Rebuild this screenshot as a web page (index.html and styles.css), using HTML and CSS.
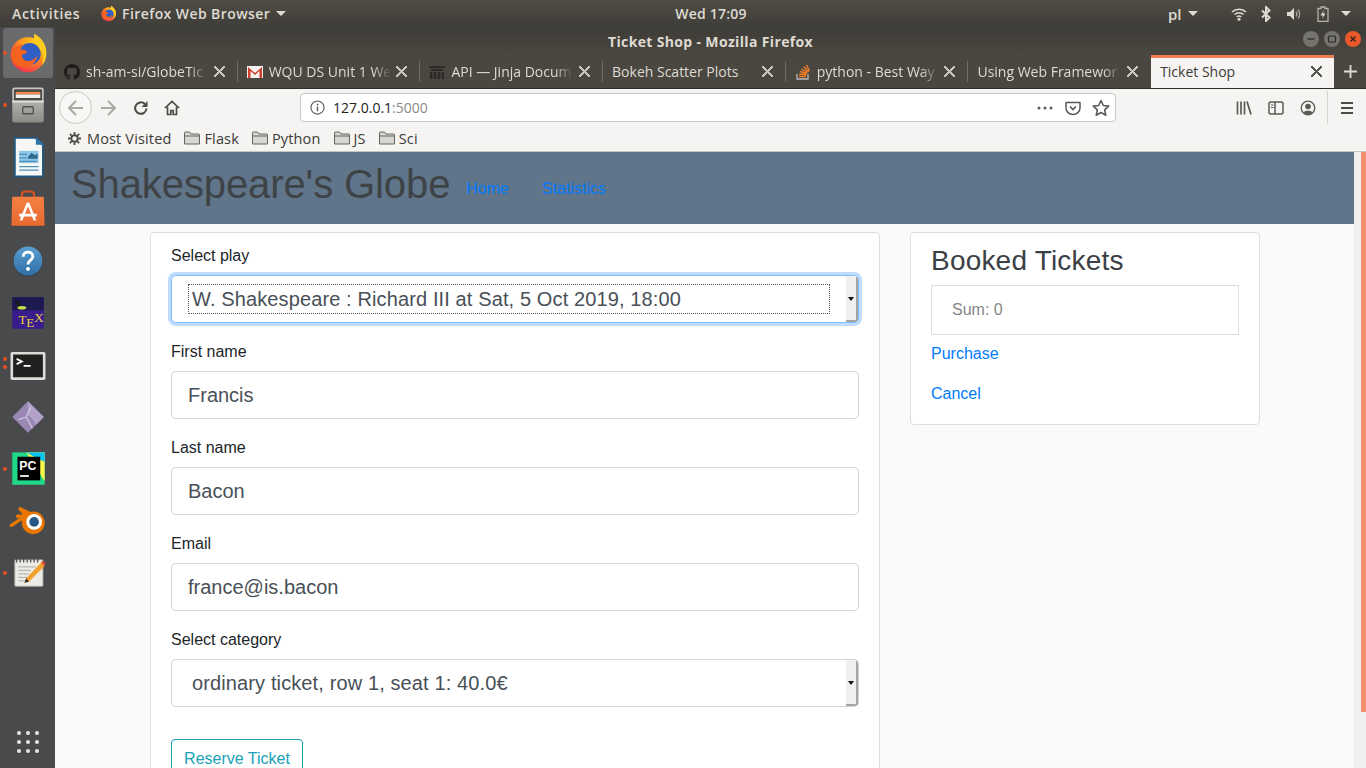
FILE: index.html
```html
<!doctype html>
<html lang="en">
<head>
    <meta charset="UTF-8">
    <title>Ticket Shop</title>
    <link rel="stylesheet" href="styles.css">
</head>
<body>
<svg class="sprites" width="0" height="0">
    <defs>
        <radialGradient id="ff-body" cx="75%" cy="15%" r="95%">
            <stop offset="0" stop-color="#ffd21f"/>
            <stop offset="0.45" stop-color="#ff9a1c"/>
            <stop offset="1" stop-color="#f0304f"/>
        </radialGradient>
        <linearGradient id="shop-bag" x1="0" y1="0" x2="0" y2="1">
            <stop offset="0" stop-color="#f58043"/>
            <stop offset="1" stop-color="#e8692e"/>
        </linearGradient>
        <linearGradient id="help-ball" x1="0" y1="0" x2="0" y2="1">
            <stop offset="0" stop-color="#5a9fd0"/>
            <stop offset="1" stop-color="#2f6ea6"/>
        </linearGradient>
        <linearGradient id="drawer" x1="0" y1="0" x2="0" y2="1">
            <stop offset="0" stop-color="#c9c9c5"/>
            <stop offset="1" stop-color="#8a8a86"/>
        </linearGradient>
        <symbol id="firefox" viewBox="0 0 48 48">
            <circle cx="24" cy="26" r="20" fill="url(#ff-body)"/>
            <path d="M31 2c8 4 15 12 14 24-.4 5-2 9-5 12 2-8 1-15-3-20-3-3-7-6-6-16z" fill="#ffcb1f"/>
            <circle cx="26" cy="25" r="12.5" fill="#2f5fc4"/>
            <path d="M5 23c2-5 8-9 14-9-3 2-4 4-3 6 3 0 6 1 7 3-1 2-4 2-6 3 0 5 4 8 9 7 4-1 7-4 9-6-2 8-9 14-18 13C9 40 3 31 5 23z" fill="#f4641e"/>
        </symbol>
        <symbol id="folder" viewBox="0 0 16 14">
            <path d="M.5 13V2q0-1 1-1h4l1.500 2h7.500q1 0 1 1v9z" fill="#d8d6d0" stroke="#66645f"/>
            <path d="M.5 5h15" stroke="#66645f"/>
        </symbol>
        <symbol id="github" viewBox="0 0 16 16">
            <path fill="#1d1c1a" d="M8 0C3.580 0 0 3.580 0 8c0 3.540 2.290 6.530 5.470 7.590.4.070.55-.17.55-.38 0-.19-.01-.82-.01-1.490-2.010.37-2.530-.49-2.690-.94-.09-.23-.48-.94-.82-1.130-.28-.15-.68-.52-.01-.53.63-.01 1.080.58 1.230.82.72 1.210 1.870.87 2.330.66.07-.52.28-.87.51-1.070-1.780-.2-3.640-.89-3.640-3.950 0-.87.31-1.590.82-2.150-.08-.2-.36-1.020.08-2.120 0 0 .67-.21 2.200.82.64-.18 1.320-.27 2-.27.68 0 1.360.09 2 .27 1.530-1.040 2.200-.82 2.200-.82.44 1.100.16 1.920.08 2.120.51.56.82 1.270.82 2.150 0 3.070-1.870 3.750-3.650 3.950.29.25.54.73.54 1.480 0 1.070-.01 1.930-.01 2.200 0 .21.15.46.55.38A8.013 8.013 0 0016 8c0-4.420-3.580-8-8-8z"/>
        </symbol>
    </defs>
</svg>

<header class="topbar">
    <span class="topbar-activities">Activities</span>
    <svg class="topbar-ff"><use href="#firefox"/></svg>
    <span class="topbar-app">Firefox Web Browser</span>
    <span class="caret"></span>
    <span class="topbar-clock">Wed 17:09</span>
    <span class="topbar-lang">pl</span>
    <span class="caret"></span>
    <svg class="tray tray-wifi" viewBox="0 0 16 14"><path d="M1 5a10 10 0 0 1 14 0M3.500 7.500a6.500 6.500 0 0 1 9 0M5.800 10a3.200 3.200 0 0 1 4.400 0" fill="none" stroke="#dfdbd2" stroke-width="1.500"/><circle cx="8" cy="12.300" r="1.500" fill="#dfdbd2"/></svg>
    <svg class="tray tray-bt" viewBox="0 0 12 16"><path d="M2 4.500l7.500 7L6 15V1l3.500 3.500L2 11.500" fill="none" stroke="#dfdbd2" stroke-width="2"/></svg>
    <svg class="tray tray-vol" viewBox="0 0 16 14"><path d="M1 5h3l4-4v12l-4-4H1z" fill="#dfdbd2"/><path d="M10 4.500a4 4 0 0 1 0 5M12 2.500a7 7 0 0 1 0 9" fill="none" stroke="#aaa79f" stroke-width="1.300"/></svg>
    <svg class="tray tray-bat" viewBox="0 0 12 16"><path d="M4 1h4v1.500h3v13H1v-13h3z" fill="none" stroke="#b5b2aa" stroke-width="1.300"/><path d="M7 4L3.500 9.500H6L5 13l3.500-5.500H6z" fill="#dfdbd2"/></svg>
    <span class="caret caret-last"></span>
</header>

<div class="desktop">
    <nav class="dock">
        <div class="dock-item dock-active">
            <i class="dot"></i>
            <svg class="dock-icon"><use href="#firefox"/></svg>
        </div>
        <div class="dock-item">
            <i class="dot"></i>
            <svg class="dock-icon" viewBox="0 0 48 48">
                <rect x="6" y="4" width="36" height="40" rx="3" fill="url(#drawer)"/>
                <rect x="8" y="6" width="32" height="13" fill="#4a4a48"/>
                <rect x="10" y="9" width="28" height="3" fill="#ef8a4c"/>
                <rect x="10" y="12" width="28" height="4" fill="#f1f0ee"/>
                <rect x="6" y="19" width="36" height="2" fill="#e4e4e0"/>
                <rect x="18" y="26" width="12" height="8" rx="1" fill="none" stroke="#4f4f4d" stroke-width="1.500"/>
            </svg>
        </div>
        <div class="dock-item">
            <svg class="dock-icon" viewBox="0 0 48 48">
                <path d="M8 1h25l9 9v37H8z" fill="#1e5a82"/>
                <path d="M10 3h22l8 8v34H10z" fill="#f7f7f5"/>
                <path d="M33 1l9 9h-9z" fill="#2a76a8"/>
                <rect x="14" y="17" width="22" height="14" fill="#8fc7e6"/>
                <path d="M24 24l4-5 4 3 3-2v6H24z" fill="#2f6b8e"/>
                <path d="M14 21h9M14 25h9M14 29h20M14 35h22M14 39h22" stroke="#4b93bd" stroke-width="1.500"/>
            </svg>
        </div>
        <div class="dock-item">
            <svg class="dock-icon" viewBox="0 0 48 48">
                <path d="M17 12V8q0-4 4-4h6q4 0 4 4v4" fill="none" stroke="#d9531e" stroke-width="2.500"/>
                <path d="M6 10h36l1 33H5z" fill="url(#shop-bag)"/>
                <path d="M24 17l-8 20M24 17l8 20M14 31h20" stroke="#fff" stroke-width="3" fill="none"/>
            </svg>
        </div>
        <div class="dock-item">
            <svg class="dock-icon" viewBox="0 0 48 48">
                <circle cx="24" cy="25" r="17" fill="#2c2d2e" opacity=".35"/>
                <circle cx="24" cy="24" r="16.500" fill="url(#help-ball)"/>
                <path d="M18.500 19c0-7 11-7 11 0 0 4-5.500 4-5.500 9" fill="none" stroke="#fff" stroke-width="3.200"/>
                <circle cx="24" cy="33" r="2.200" fill="#fff"/>
            </svg>
        </div>
        <div class="dock-item">
            <svg class="dock-icon" viewBox="0 0 48 48">
                <rect x="6" y="6" width="36" height="36" rx="2" fill="#3a1d8c"/>
                <rect x="6" y="6" width="36" height="15" fill="#1c1850"/>
                <path d="M8 8l6 4 4 7-6-3z" fill="#191919"/>
                <ellipse cx="17" cy="18" rx="5" ry="2" fill="#c8e04a"/>
                <text class="tex-logo" x="13" y="36">T</text>
                <text class="tex-logo" x="22" y="40">E</text>
                <text class="tex-logo" x="31" y="34">X</text>
            </svg>
        </div>
        <div class="dock-item">
            <i class="dot dot-upper"></i>
            <i class="dot dot-lower"></i>
            <svg class="dock-icon" viewBox="0 0 48 48">
                <rect x="4" y="9" width="40" height="32" rx="2" fill="#dcdcd8"/>
                <rect x="7" y="12" width="34" height="26" fill="#20201f"/>
                <path d="M11 17l6 3-6 3" fill="none" stroke="#fff" stroke-width="2"/>
                <path d="M19 25h8" stroke="#fff" stroke-width="2"/>
            </svg>
        </div>
        <div class="dock-item">
            <svg class="dock-icon" viewBox="0 0 48 48">
                <path d="M24 6l18 18-18 18L6 24z" fill="#9a87b5"/>
                <path d="M24 6l18 18-9 9c-2-5-5-9-9-11z" fill="#b3a2c9"/>
                <path d="M27 13l-5 11 7 13M22 24l-9 3" fill="none" stroke="#cfc5dd" stroke-width="1.500"/>
            </svg>
        </div>
        <div class="dock-item">
            <i class="dot"></i>
            <svg class="dock-icon" viewBox="0 0 48 48">
                <rect x="6" y="5" width="37" height="37" fill="#21d789"/>
                <path d="M22 5h21v33z" fill="#fcf84a"/>
                <path d="M22 5h21v11z" fill="#07c3f2"/>
                <rect x="12" y="10" width="26" height="27" fill="#000"/>
                <text class="pc-logo" x="14" y="25">PC</text>
                <rect x="15" y="31" width="10" height="2" fill="#fff"/>
            </svg>
        </div>
        <div class="dock-item">
            <svg class="dock-icon" viewBox="0 0 48 48">
                <path d="M5 29l15-10-8-.5h10L15 10l16 8" fill="none" stroke="#ea7600" stroke-width="4" stroke-linecap="round" stroke-linejoin="round"/>
                <circle cx="30" cy="26" r="13" fill="#ea7600"/>
                <circle cx="31" cy="25" r="9" fill="#fff"/>
                <circle cx="31" cy="25" r="5.500" fill="#265787"/>
            </svg>
        </div>
        <div class="dock-item">
            <i class="dot"></i>
            <svg class="dock-icon" viewBox="0 0 48 48">
                <rect x="9" y="9" width="32" height="30" rx="1" fill="#ecebe6" stroke="#bdbcb6"/>
                <path d="M11 8v4M15 8v4M19 8v4M23 8v4M27 8v4M31 8v4M35 8v4" stroke="#55544f" stroke-width="1.500"/>
                <path d="M13 17h20M13 21h14M13 25h12M13 29h10M13 33h8" stroke="#a3a29c"/>
                <path d="M20 35l2-5 17-18 4 4-18 18z" fill="#f1a02d"/>
                <path d="M39 12l2-2 3 3-1 3z" fill="#e2403f"/>
                <path d="M20 35l2-5 3 4z" fill="#2b2a28"/>
            </svg>
        </div>
        <div class="dock-apps">
            <i></i><i></i><i></i><i></i><i></i><i></i><i></i><i></i><i></i>
        </div>
    </nav>

    <div class="window">
        <div class="titlebar">
            <span class="titlebar-text">Ticket Shop - Mozilla Firefox</span>
            <div class="winbtns">
                <span class="winbtn"><svg viewBox="0 0 10 10"><path d="M1.500 5h7" stroke="#2e2d2a" stroke-width="1.300"/></svg></span>
                <span class="winbtn"><svg viewBox="0 0 10 10"><rect x="1.500" y="2" width="7" height="6" rx="1" fill="none" stroke="#2e2d2a" stroke-width="1.200"/></svg></span>
                <span class="winbtn winbtn-close"><svg viewBox="0 0 10 10"><path d="M2.500 2.500l5 5m0-5l-5 5" stroke="#3a2015" stroke-width="1.300"/></svg></span>
            </div>
        </div>

        <div class="tabs">
            <div class="tab">
                <svg class="favicon"><use href="#github"/></svg>
                <span class="tab-title">sh-am-si/GlobeTic</span>
                <span class="tab-close"></span>
            </div>
            <div class="tab">
                <svg class="favicon" viewBox="0 0 16 16">
                    <rect y="2" width="16" height="12" fill="#f4f2ee"/>
                    <path d="M1 14V3l7 6 7-6v11h-2.500V7L8 11 3.500 7v7z" fill="#d23f31"/>
                </svg>
                <span class="tab-title">WQU DS Unit 1 We</span>
                <span class="tab-close"></span>
            </div>
            <div class="tab">
                <svg class="favicon" viewBox="0 0 16 16">
                    <path d="M0 2h16v2H0zM2 5h12v2H2zM1 8h14v7H1z" fill="#2c2b28"/>
                    <path d="M4 8v7M8 8v7M12 8v7" stroke="#55534e"/>
                </svg>
                <span class="tab-title">API — Jinja Docum</span>
                <span class="tab-close"></span>
            </div>
            <div class="tab">
                <span class="tab-title tab-title-plain">Bokeh Scatter Plots</span>
                <span class="tab-close"></span>
            </div>
            <div class="tab">
                <svg class="favicon" viewBox="0 0 16 16">
                    <path d="M2 10v5h11v-5" fill="none" stroke="#bcbbbb" stroke-width="1.300"/>
                    <path d="M4 12.500h7M4.200 10l7 .8M5 7.500l6.800 2M6.500 5l6 3.500M8.800 2.800l4.800 5M11.500 1l3 6" stroke="#f48024" stroke-width="1.400"/>
                </svg>
                <span class="tab-title">python - Best Way</span>
                <span class="tab-close"></span>
            </div>
            <div class="tab tab-last">
                <span class="tab-title tab-title-plain tab-title-fade">Using Web Framewor</span>
                <span class="tab-close"></span>
            </div>
            <div class="tab tab-active">
                <span class="tab-title tab-title-plain">Ticket Shop</span>
                <span class="tab-close"></span>
            </div>
            <svg class="tab-new" viewBox="0 0 14 14"><path d="M7 0v14M0 7h14" stroke="#dfdbd2" stroke-width="2"/></svg>
        </div>

        <div class="toolbar">
            <span class="back-btn">
                <svg viewBox="0 0 18 18"><path d="M16 9H2M9 2L2 9l7 7" fill="none" stroke="#a9a8a5" stroke-width="2"/></svg>
            </span>
            <svg class="tool tool-forward" viewBox="0 0 18 18"><path d="M2 9h14M9 2l7 7-7 7" fill="none" stroke="#a9a8a5" stroke-width="2"/></svg>
            <svg class="tool tool-reload" viewBox="0 0 16 16"><path d="M13.500 8.500A5.700 5.700 0 1 1 11.800 4" fill="none" stroke="#4b4a47" stroke-width="2"/><path d="M14.500 1v6h-6z" fill="#4b4a47"/></svg>
            <svg class="tool tool-home" viewBox="0 0 16 16"><path d="M1 8l7-6.500L15 8M3.500 7v7.500h3.300v-4h2.400v4h3.300V7" fill="none" stroke="#4b4a47" stroke-width="1.700"/></svg>
            <div class="urlbar">
                <svg class="url-info" viewBox="0 0 16 16"><circle cx="8" cy="8" r="7" fill="none" stroke="#5a5956" stroke-width="1.200"/><path d="M8 7v5M8 4v1.800" stroke="#5a5956" stroke-width="1.500"/></svg>
                <span class="url-text">127.0.0.1<span class="url-port">:5000</span></span>
                <svg class="url-dots" viewBox="0 0 16 4"><circle cx="2" cy="2" r="1.500"/><circle cx="8" cy="2" r="1.500"/><circle cx="14" cy="2" r="1.500"/></svg>
                <svg class="url-pocket" viewBox="0 0 16 16"><path d="M1 2.500h14v5.500a7 6.500 0 0 1-14 0z" fill="none" stroke="#5a5956" stroke-width="1.500" stroke-linejoin="round"/><path d="M5 6.500l3 3 3-3" fill="none" stroke="#5a5956" stroke-width="1.700"/></svg>
                <svg class="url-star" viewBox="0 0 18 18"><path d="M9 1.500l2.300 5 5.400.6-4 3.700 1.100 5.400L9 13.500l-4.800 2.700 1.100-5.400-4-3.700 5.400-.6z" fill="none" stroke="#5a5956" stroke-width="1.600" stroke-linejoin="round"/></svg>
            </div>
            <svg class="tool tool-library" viewBox="0 0 16 16"><path d="M1.500 1.500v13M5 1.500v13M8.500 1.500v13M11 1.500l4 13" fill="none" stroke="#5a5956" stroke-width="1.700"/></svg>
            <svg class="tool tool-sidebar" viewBox="0 0 16 16"><rect x="1" y="2" width="14" height="12" rx="2" fill="none" stroke="#5a5956" stroke-width="1.500"/><path d="M7 2v12" stroke="#5a5956" stroke-width="1.500"/><path d="M3 5h2.500M3 7.500h2.500" stroke="#5a5956"/></svg>
            <svg class="tool tool-account" viewBox="0 0 16 16"><circle cx="8" cy="8" r="6.800" fill="none" stroke="#5a5956" stroke-width="1.300"/><circle cx="8" cy="6.500" r="2.800" fill="#5a5956"/><path d="M3.500 12.500c1-2.500 8-2.500 9 0-2 2-7 2-9 0z" fill="#5a5956"/></svg>
            <span class="toolbar-sep"></span>
            <svg class="tool tool-menu" viewBox="0 0 16 16"><path d="M2 3h12M2 8h12M2 13h12" stroke="#4b4a47" stroke-width="2"/></svg>
        </div>

        <div class="bookmarks">
            <span class="bookmark">
                <svg class="bookmark-gear" viewBox="0 0 16 16"><circle cx="8" cy="8" r="4" fill="none" stroke="#4b4a47" stroke-width="2.400"/><path d="M8 0v3M8 13v3M0 8h3M13 8h3M2.300 2.300l2.100 2.100M11.600 11.600l2.100 2.100M2.300 13.700l2.100-2.100M11.600 4.400l2.100-2.100" stroke="#4b4a47" stroke-width="2.200"/></svg>
                Most Visited
            </span>
            <span class="bookmark"><svg class="bookmark-folder"><use href="#folder"/></svg>Flask</span>
            <span class="bookmark"><svg class="bookmark-folder"><use href="#folder"/></svg>Python</span>
            <span class="bookmark"><svg class="bookmark-folder"><use href="#folder"/></svg>JS</span>
            <span class="bookmark"><svg class="bookmark-folder"><use href="#folder"/></svg>Sci</span>
        </div>

        <div class="viewport">
            <div class="page">
                <div class="site-header">
                    <span class="site-title">Shakespeare's Globe</span>
                    <a class="site-link" href="#">Home</a>
                    <a class="site-link" href="#">Statistics</a>
                </div>
                <div class="site-main">
                    <form class="card card-form">
                        <div class="form-group">
                            <label>Select play</label>
                            <div class="select select-focus">
                                <span class="select-value"><span class="select-ring">W. Shakespeare : Richard III at Sat, 5 Oct 2019, 18:00</span></span>
                                <span class="select-arrow"></span>
                            </div>
                        </div>
                        <div class="form-group">
                            <label>First name</label>
                            <div class="input">Francis</div>
                        </div>
                        <div class="form-group">
                            <label>Last name</label>
                            <div class="input">Bacon</div>
                        </div>
                        <div class="form-group">
                            <label>Email</label>
                            <div class="input">france@is.bacon</div>
                        </div>
                        <div class="form-group">
                            <label>Select category</label>
                            <div class="select">
                                <span class="select-value"><span class="select-ring">ordinary ticket, row 1, seat 1: 40.0€</span></span>
                                <span class="select-arrow"></span>
                            </div>
                        </div>
                        <button class="btn-reserve" type="button">Reserve Ticket</button>
                    </form>
                    <aside class="card card-side">
                        <h3 class="side-title">Booked Tickets</h3>
                        <div class="side-sum">Sum: 0</div>
                        <a class="side-link" href="#">Purchase</a>
                        <a class="side-link" href="#">Cancel</a>
                    </aside>
                </div>
            </div>
            <div class="scrollbar"><span class="scrollbar-thumb"></span></div>
        </div>
    </div>
</div>
</body>
</html>
```

FILE: styles.css
```css
* {
    box-sizing: border-box;
}

html, body {
    margin: 0;
    height: 768px;
    overflow: hidden;
}

body {
    display: flex;
    flex-direction: column;
    font-family: "Open Sans", "Noto Sans", sans-serif;
    font-size: 14px;
    background: #494a4b;
}

.sprites {
    position: absolute;
}

/* gnome top bar */
.topbar {
    flex: none;
    height: 27px;
    display: flex;
    align-items: center;
    position: relative;
    padding-left: 12px;
    color: #dfdbd2;
    font-weight: 600;
    background: linear-gradient(#4f4c45, #3f3d38);
}

.topbar-activities {
    width: 88px;
    letter-spacing: .7px;
}

.topbar-ff {
    width: 17px;
    height: 17px;
    margin-right: 5px;
}

.topbar-app {
    width: 154px;
    letter-spacing: .42px;
}

.caret {
    width: 0;
    height: 0;
    border: 5px solid transparent;
    border-top: 5px solid #dfdbd2;
    border-bottom: 0;
}

.topbar-clock {
    position: absolute;
    left: 0;
    width: 1422px;
    text-align: center;
    letter-spacing: .2px;
}

.topbar-lang {
    margin-left: 882px;
    width: 20px;
    font-size: 15px;
}

.tray {
    height: 16px;
    width: 16px;
}

.tray-wifi {
    margin-left: 33px;
}

.tray-bt {
    margin-left: 11px;
}

.tray-vol {
    margin-left: 12px;
}

.tray-bat {
    margin-left: 13px;
}

.caret-last {
    margin-left: 10px;
}

.desktop {
    flex: 1;
    display: flex;
    min-height: 0;
}

/* launcher */
.dock {
    flex: none;
    width: 55px;
    padding-top: 1px;
    display: flex;
    flex-direction: column;
    align-items: center;
    background: #494a4b;
}

.dock-item {
    width: 50px;
    height: 50px;
    flex: none;
    margin-bottom: 2px;
    position: relative;
    display: flex;
    align-items: center;
    justify-content: center;
    border-radius: 3px;
}

.dock-active {
    background: #6a6b6c;
}

.dock-icon {
    width: 42px;
    height: 42px;
}

.dot {
    position: absolute;
    left: 0;
    top: 23px;
    width: 4px;
    height: 4px;
    border-radius: 50%;
    background: #e8501f;
}

.dot-upper {
    top: 17px;
}

.dot-lower {
    top: 25px;
}

.tex-logo {
    font-family: "Liberation Serif", serif;
    font-size: 15px;
    fill: #e6d23a;
}

.pc-logo {
    font-family: "Liberation Sans", sans-serif;
    font-size: 14px;
    font-weight: 700;
    fill: #fff;
}

.dock-apps {
    margin-top: auto;
    margin-bottom: 15px;
    display: grid;
    grid-template-columns: repeat(3, 4px);
    gap: 5px;
}

.dock-apps i {
    height: 4px;
    width: 4px;
    border-radius: 50%;
    background: #e6e6e4;
}

/* firefox window */
.window {
    flex: 1;
    min-width: 0;
    display: flex;
    flex-direction: column;
}

.titlebar {
    flex: none;
    height: 28px;
    position: relative;
    display: flex;
    align-items: center;
    justify-content: center;
    color: #dfdbd2;
    font-weight: 700;
    font-size: 14px;
    letter-spacing: .35px;
    background: linear-gradient(#3e3c37, #4a4741);
}

.winbtns {
    position: absolute;
    right: 5px;
    top: 4px;
    display: flex;
    gap: 5px;
}

.winbtn {
    width: 16px;
    height: 16px;
    border-radius: 50%;
    background: #75736d;
    display: flex;
    align-items: center;
    justify-content: center;
}

.winbtn svg {
    width: 10px;
    height: 10px;
}

.winbtn-close {
    background: #e9592c;
}

.tabs {
    flex: none;
    height: 34px;
    display: flex;
    align-items: center;
    color: #dfdbd2;
    background: #4a4741;
    border-bottom: 1px solid #2f2e2a;
}

.tab {
    flex: none;
    width: 182.700px;
    height: 33px;
    display: flex;
    align-items: center;
    padding-left: 9px;
    position: relative;
}

.tab::after {
    content: "";
    position: absolute;
    right: 0;
    top: 6px;
    bottom: 6px;
    width: 1px;
    background: #6e6b64;
}

.tab-last::after,
.tab-active::after {
    display: none;
}

.tab-active {
    color: #3c3b37;
    background: #f5f4f2;
    border-top: 3px solid #ef7b53;
    padding-bottom: 4px;
}

.favicon {
    flex: none;
    width: 16px;
    height: 16px;
    margin-right: 6px;
}

.tab-title {
    flex: none;
    width: 122px;
    white-space: nowrap;
    -webkit-mask-image: linear-gradient(90deg, #000 85%, transparent);
    mask-image: linear-gradient(90deg, #000 85%, transparent);
}

.tab-title-plain {
    width: 144px;
    -webkit-mask-image: none;
    mask-image: none;
}

.tab-title-fade {
    -webkit-mask-image: linear-gradient(90deg, #000 88%, transparent);
    mask-image: linear-gradient(90deg, #000 88%, transparent);
}

.tab-close {
    position: absolute;
    right: 13px;
    top: 11px;
    width: 11px;
    height: 11px;
    opacity: .85;
    background:
        linear-gradient(45deg, transparent 45%, currentColor 45%, currentColor 55%, transparent 55%),
        linear-gradient(-45deg, transparent 45%, currentColor 45%, currentColor 55%, transparent 55%);
}

.tab-active .tab-close {
    right: 12px;
    top: 8px;
}

.tab-new {
    width: 13px;
    height: 13px;
    margin-left: 10px;
}

.toolbar {
    flex: none;
    height: 37px;
    display: flex;
    align-items: center;
    padding-left: 4px;
    background: #f5f4f2;
}

.back-btn {
    flex: none;
    width: 33px;
    height: 33px;
    border-radius: 50%;
    border: 1px solid #c9c8c4;
    background: #f8f7f6;
    display: flex;
    align-items: center;
    justify-content: center;
}

.back-btn svg {
    width: 18px;
    height: 18px;
}

.tool {
    flex: none;
    width: 16px;
    height: 16px;
}

.tool-forward {
    width: 18px;
    height: 18px;
    margin-left: 7px;
}

.tool-reload {
    margin-left: 16px;
}

.tool-home {
    margin-left: 15px;
}

.urlbar {
    flex: none;
    width: 816px;
    height: 29px;
    margin-left: 120px;
    display: flex;
    align-items: center;
    background: #fff;
    border: 1px solid #c9c8c4;
    border-radius: 4px;
    padding-left: 9px;
}

.url-info {
    width: 15px;
    height: 15px;
    margin-right: 8px;
}

.url-text {
    flex: 1;
    color: #242320;
    font-size: 14px;
}

.url-port {
    color: #8b8a87;
}

.url-dots {
    width: 16px;
    height: 4px;
    fill: #5a5956;
}

.url-pocket {
    width: 16px;
    height: 16px;
    margin-left: 12px;
}

.url-star {
    width: 18px;
    height: 18px;
    margin: 0 5px 0 11px;
}

.tool-library {
    margin-left: 120px;
}

.tool-sidebar {
    margin-left: 16px;
}

.tool-account {
    margin-left: 16px;
}

.toolbar-sep {
    width: 1px;
    height: 33px;
    margin: 0 11px;
    background: #d5d4d0;
}

.bookmarks {
    flex: none;
    height: 26px;
    display: flex;
    align-items: center;
    padding: 0 0 1px 13px;
    font-size: 14.500px;
    letter-spacing: .15px;
    color: #3c3b37;
    background: #f5f4f2;
    border-bottom: 1px solid #c8c6c2;
}

.bookmark {
    display: flex;
    align-items: center;
    margin-right: 13px;
}

.bookmark-gear {
    width: 13px;
    height: 13px;
    margin-right: 6px;
}

.bookmark-folder {
    width: 16px;
    height: 14px;
    margin-right: 4px;
}

/* page in the browser */
.viewport {
    flex: 1;
    min-height: 0;
    display: flex;
}

.page {
    flex: 1;
    min-width: 0;
    overflow: hidden;
    background: #fafafa;
    font-family: "Liberation Sans", Arial, sans-serif;
    font-size: 16px;
    line-height: 24px;
    color: #212529;
}

.scrollbar {
    flex: none;
    width: 12px;
    display: flex;
    justify-content: flex-end;
    background: #f1f0ee;
}

.scrollbar-thumb {
    width: 5px;
    height: 560px;
    background: #f28e69;
}

.site-header {
    height: 72px;
    display: flex;
    align-items: flex-start;
    padding: 8px 0 0 16px;
    background: #607589;
}

.site-title {
    font-size: 40px;
    line-height: 48px;
    letter-spacing: -.1px;
    color: #3e4347;
    margin-right: 16px;
}

.site-link {
    color: #007bff;
    text-decoration: none;
    margin-right: 33px;
    margin-top: 17px;
}

.site-main {
    display: flex;
    gap: 30px;
    padding: 8px 0 0 95px;
}

.card {
    background: #fff;
    border: 1px solid #ddd;
    border-radius: 4px;
    padding: 10px 20px;
}

.card-form {
    flex: none;
    width: 730px;
}

.card-side {
    flex: none;
    width: 350px;
    height: 193px;
}

.form-group {
    margin-bottom: 16px;
}

.form-group label {
    display: block;
    padding-top: 1px;
    margin-bottom: 7px;
}

.input {
    height: 48px;
    padding: 0 16px;
    display: flex;
    align-items: center;
    font-size: 20px;
    color: #495057;
    background: #fff;
    border: 1px solid #ced4da;
    border-radius: 4.800px;
}

.select {
    height: 48px;
    display: flex;
    font-size: 20px;
    letter-spacing: .12px;
    color: #495057;
    background: #fff;
    border: 1px solid #ced4da;
    border-radius: 4.800px;
    overflow: hidden;
}

.select-focus {
    border-color: #80bdff;
    box-shadow: 0 0 0 3px rgba(0, 123, 255, .25);
}

.select-value {
    flex: 1;
    display: flex;
    align-items: center;
    padding-left: 16px;
    padding-right: 16px;
}

.select-ring {
    flex: 1;
    height: 30px;
    line-height: 28px;
    padding-left: 3px;
    border: 1px dotted transparent;
}

.select-focus .select-ring {
    border-color: #555;
}

.select-arrow {
    flex: none;
    width: 12px;
    position: relative;
    background: #f1f0ee;
    border-right: 2px solid #a5a4a2;
    border-bottom: 2px solid #a5a4a2;
}

.select-arrow::after {
    content: "";
    position: absolute;
    left: 2px;
    top: 21px;
    border: 3px solid transparent;
    border-top: 4px solid #111;
    border-bottom: 0;
}

.btn-reserve {
    display: block;
    margin-top: 32px;
    width: 132px;
    height: 38px;
    padding: 1px 0 0;
    font-family: inherit;
    font-size: 16px;
    color: #17a2b8;
    background: transparent;
    border: 1px solid #17a2b8;
    border-radius: 4px;
}

.side-title {
    margin: 1px 0 7px;
    font-size: 28px;
    font-weight: 500;
    letter-spacing: .2px;
    line-height: 33.600px;
    color: #3b4045;
}

.side-sum {
    height: 50px;
    padding: 12px 20px;
    color: #868686;
    border: 1px solid rgba(0, 0, 0, .125);
}

.side-link {
    display: block;
    margin-top: 16px;
    color: #007bff;
    text-decoration: none;
}

.side-sum + .side-link {
    margin-top: 7px;
}
```
